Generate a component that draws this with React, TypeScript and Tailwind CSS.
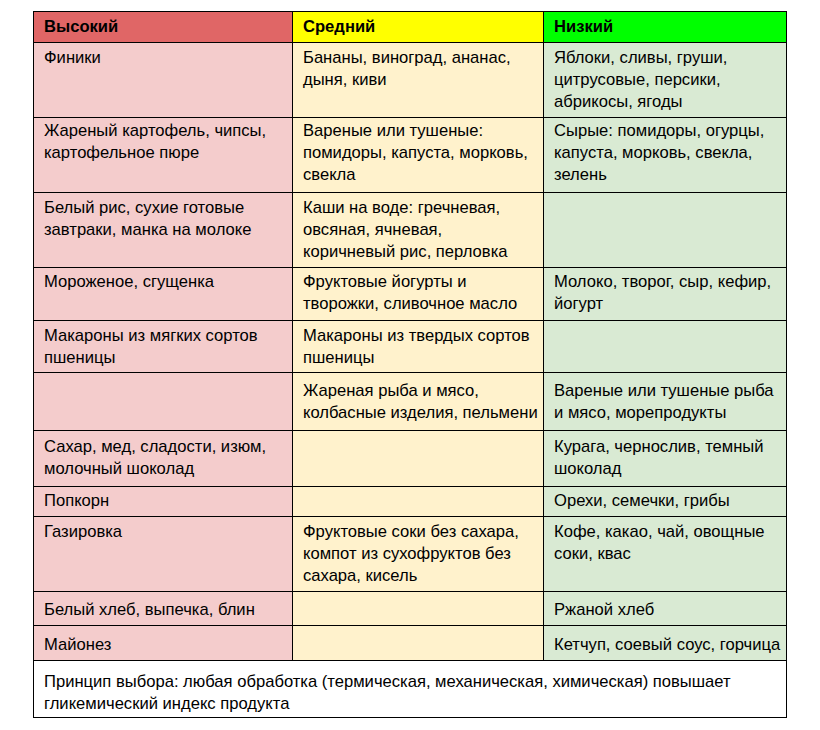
const rows: { h: string; pt: string; cells: string[] }[] = [
  { h: "h-[75px]", pt: "pt-[4px]", cells: ["Финики", "Бананы, виноград, ананас, дыня, киви", "Яблоки, сливы, груши, цитрусовые, персики, абрикосы, ягоды"] },
  { h: "h-[75px]", pt: "pt-[2px]", cells: ["Жареный картофель, чипсы, картофельное пюре", "Вареные или тушеные: помидоры, капуста, морковь, свекла", "Сырые: помидоры, огурцы, капуста, морковь, свекла, зелень"] },
  { h: "h-[75px]", pt: "pt-[4px]", cells: ["Белый рис, сухие готовые завтраки, манка на молоке", "Каши на воде: гречневая, овсяная, ячневая,\nкоричневый рис, перловка", ""] },
  { h: "h-[53px]", pt: "pt-[3px]", cells: ["Мороженое, сгущенка", "Фруктовые йогурты и творожки, сливочное масло", "Молоко, творог, сыр, кефир, йогурт"] },
  { h: "h-[52px]", pt: "pt-[4px]", cells: ["Макароны из мягких сортов пшеницы", "Макароны из твердых сортов пшеницы", ""] },
  { h: "h-[58px]", pt: "pt-[7px]", cells: ["", "Жареная рыба и мясо, колбасные изделия, пельмени", "Вареные или тушеные рыба и мясо, морепродукты"] },
  { h: "h-[56px]", pt: "pt-[5px]", cells: ["Сахар, мед, сладости, изюм, молочный шоколад", "", "Курага, чернослив, темный шоколад"] },
  { h: "h-[30px]", pt: "pt-[3px]", cells: ["Попкорн", "", "Орехи, семечки, грибы"] },
  { h: "h-[75px]", pt: "pt-[4px]", cells: ["Газировка", "Фруктовые соки без сахара, компот из сухофруктов без сахара, кисель", "Кофе, какао, чай, овощные соки, квас"] },
  { h: "h-[34px]", pt: "pt-[7px]", cells: ["Белый хлеб, выпечка, блин", "", "Ржаной хлеб"] },
  { h: "h-[35px]", pt: "pt-[8px]", cells: ["Майонез", "", "Кетчуп, соевый соус, горчица"] },
];

const bodyBg = ["bg-[#f4cccc]", "bg-[#fff2cc]", "bg-[#d9ead3]"];

export default function App() {
  return (
    <div className="min-h-[730px] w-[820px] bg-white pt-[11px] pl-[33px] font-['Liberation_Sans',Arial,sans-serif] text-[16.6px] leading-[22px] text-black">
      <table className="w-[753px] table-fixed border-collapse border border-black">
        <colgroup>
          <col className="w-[259px]" />
          <col className="w-[251px]" />
          <col className="w-[243px]" />
        </colgroup>
        <thead>
          <tr className="h-[31px]">
            <th className="border border-black bg-[#e06666] pl-[10px] pr-[3px] pt-[4px] text-left align-top font-bold">Высокий</th>
            <th className="border border-black bg-[#ffff00] pl-[10px] pr-[3px] pt-[4px] text-left align-top font-bold">Средний</th>
            <th className="border border-black bg-[#00ff00] pl-[10px] pr-[3px] pt-[4px] text-left align-top font-bold">Низкий</th>
          </tr>
        </thead>
        <tbody>
          {rows.map((r, i) => (
            <tr key={i} className={r.h}>
              {r.cells.map((c, j) => (
                <td key={j} className={`whitespace-pre-line border border-black pl-[10px] pr-[3px] align-top ${r.pt} ${bodyBg[j]}`}>
                  {c}
                </td>
              ))}
            </tr>
          ))}
          <tr className="h-[57px]">
            <td colSpan={3} className="border border-black bg-white pl-[10px] pr-[3px] pt-[10px] align-top">
              Принцип выбора: любая обработка (термическая, механическая, химическая) повышает гликемический индекс продукта
            </td>
          </tr>
        </tbody>
      </table>
    </div>
  );
}
